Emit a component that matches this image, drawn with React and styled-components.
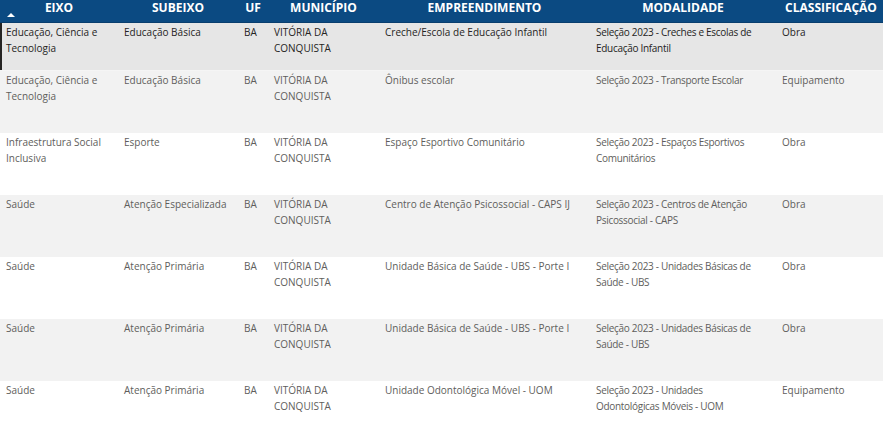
import React from 'react';
import styled, { createGlobalStyle } from 'styled-components';

const GlobalStyle = createGlobalStyle`
    html, body {
        margin: 0;
        padding: 0;
        background: #ffffff;
        overflow: hidden;
    }
`;

const COLUMNS = [
    { key: 'eixo', label: 'EIXO', width: 118, sorted: true },
    { key: 'subeixo', label: 'SUBEIXO', width: 120 },
    { key: 'uf', label: 'UF', width: 30 },
    { key: 'municipio', label: 'MUNICÍPIO', width: 111 },
    { key: 'empreendimento', label: 'EMPREENDIMENTO', width: 211 },
    { key: 'modalidade', label: 'MODALIDADE', width: 186, tight: true },
    { key: 'classificacao', label: 'CLASSIFICAÇÃO', width: 110 },
];

const ROWS = [
    {
        eixo: 'Educação, Ciência e Tecnologia',
        subeixo: 'Educação Básica',
        uf: 'BA',
        municipio: 'VITÓRIA DA CONQUISTA',
        empreendimento: 'Creche/Escola de Educação Infantil',
        modalidade: 'Seleção 2023 - Creches e Escolas de Educação Infantil',
        classificacao: 'Obra',
    },
    {
        eixo: 'Educação, Ciência e Tecnologia',
        subeixo: 'Educação Básica',
        uf: 'BA',
        municipio: 'VITÓRIA DA CONQUISTA',
        empreendimento: 'Ônibus escolar',
        modalidade: 'Seleção 2023 - Transporte Escolar',
        classificacao: 'Equipamento',
    },
    {
        eixo: 'Infraestrutura Social Inclusiva',
        subeixo: 'Esporte',
        uf: 'BA',
        municipio: 'VITÓRIA DA CONQUISTA',
        empreendimento: 'Espaço Esportivo Comunitário',
        modalidade: 'Seleção 2023 - Espaços Esportivos Comunitários',
        classificacao: 'Obra',
    },
    {
        eixo: 'Saúde',
        subeixo: 'Atenção Especializada',
        uf: 'BA',
        municipio: 'VITÓRIA DA CONQUISTA',
        empreendimento: 'Centro de Atenção Psicossocial - CAPS IJ',
        modalidade: 'Seleção 2023 - Centros de Atenção Psicossocial - CAPS',
        classificacao: 'Obra',
    },
    {
        eixo: 'Saúde',
        subeixo: 'Atenção Primária',
        uf: 'BA',
        municipio: 'VITÓRIA DA CONQUISTA',
        empreendimento: 'Unidade Básica de Saúde - UBS - Porte I',
        modalidade: 'Seleção 2023 - Unidades Básicas de Saúde - UBS',
        classificacao: 'Obra',
    },
    {
        eixo: 'Saúde',
        subeixo: 'Atenção Primária',
        uf: 'BA',
        municipio: 'VITÓRIA DA CONQUISTA',
        empreendimento: 'Unidade Básica de Saúde - UBS - Porte I',
        modalidade: 'Seleção 2023 - Unidades Básicas de Saúde - UBS',
        classificacao: 'Obra',
    },
    {
        eixo: 'Saúde',
        subeixo: 'Atenção Primária',
        uf: 'BA',
        municipio: 'VITÓRIA DA CONQUISTA',
        empreendimento: 'Unidade Odontológica Móvel - UOM',
        // wraps here in the original report
        modalidade: 'Seleção 2023 - Unidades\nOdontológicas Móveis - UOM',
        classificacao: 'Equipamento',
    },
];

const template = COLUMNS.map((c) => `${c.width}px`).join(' ');

const Table = styled.div`
    width: 883px;
    height: 437px;
    overflow: hidden;
    font-family: 'Segoe UI', 'Open Sans', 'Noto Sans', sans-serif;
`;

const HeaderRow = styled.div`
    display: grid;
    grid-template-columns: ${template};
    height: 22px;
    background: #0b4a82;
    border-bottom: 1px solid #093e6e;
`;

const HeaderCell = styled.div`
    position: relative;
    display: flex;
    justify-content: center;
    align-items: flex-start;
    font-size: 12px;
    font-weight: 700;
    line-height: 15px;
    color: #ffffff;
    white-space: nowrap;
`;

// small sort arrow below the label
const SortArrow = styled.span`
    position: absolute;
    left: 7px;
    top: 13px;
    width: 0;
    height: 0;
    border-left: 4px solid transparent;
    border-right: 4px solid transparent;
    border-bottom: 4px solid #ffffff;
`;

const Row = styled.div`
    display: grid;
    grid-template-columns: ${template};
    height: ${({ height }) => height}px;
    box-sizing: border-box;
    background: ${({ selected, striped }) =>
        selected ? '#e6e6e6' : striped ? '#f2f2f2' : '#ffffff'};
    // selection marker on the left edge
    box-shadow: ${({ selected }) => selected ? 'inset 2px 0 0 #252423' : 'none'};
    border-bottom: ${({ selected }) => selected ? '1px solid #f5f5f5' : 'none'};
    color: ${({ selected }) => selected ? '#252423' : '#605e5c'};
`;

const Cell = styled.div`
    padding: 2px 2px 0 6px;
    font-size: 10px;
    line-height: 15.5px;
    white-space: pre-line;
    letter-spacing: ${({ tight }) => tight ? '-0.3px' : 'normal'};
    overflow: hidden;
`;

export default function App() {
    return (
        <>
            <GlobalStyle />
            <Table>
                <HeaderRow>
                    {COLUMNS.map((col) => (
                        <HeaderCell key={col.key}>
                            {col.label}
                            {col.sorted && <SortArrow />}
                        </HeaderCell>
                    ))}
                </HeaderRow>
                {ROWS.map((row, i) => (
                    <Row
                        key={i}
                        selected={i === 0}
                        striped={i % 2 === 1}
                        height={i === 0 ? 48 : 62}
                    >
                        {COLUMNS.map((col) => (
                            <Cell key={col.key} tight={col.tight}>{row[col.key]}</Cell>
                        ))}
                    </Row>
                ))}
            </Table>
        </>
    );
}
